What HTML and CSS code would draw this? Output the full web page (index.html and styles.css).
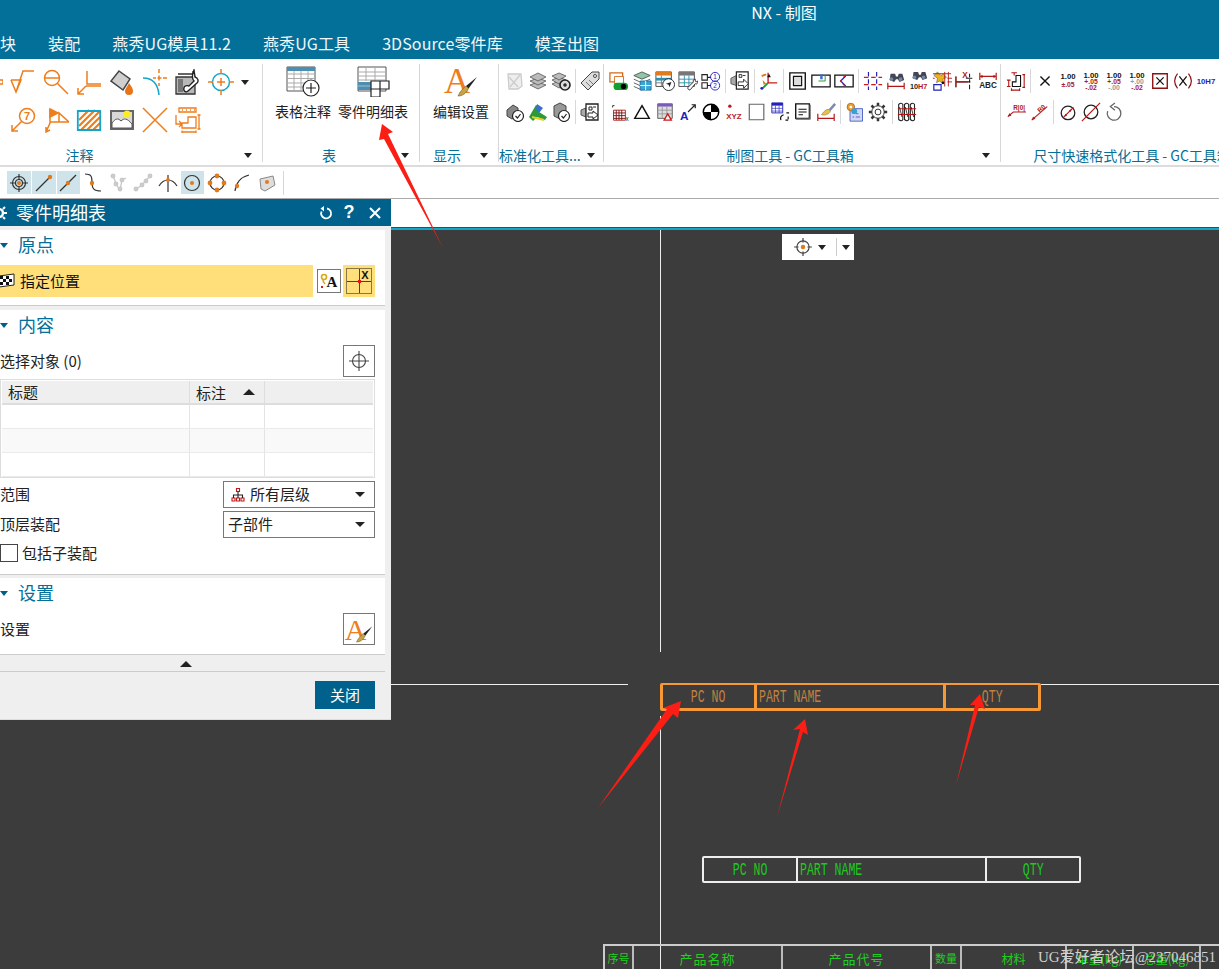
FILE: index.html
```html
<!DOCTYPE html>
<html lang="zh-CN">
<head>
<meta charset="utf-8">
<title>NX - 制图</title>
<link rel="stylesheet" href="styles.css">
</head>
<body>
<div class="app">
  <header class="topbar">
    <div class="wintitle">NX - 制图</div>
    <nav class="menu"><span>块</span><span>装配</span><span>燕秀UG模具11.2</span><span>燕秀UG工具</span><span>3DSource零件库</span><span>模圣出图</span></nav>
  </header>

  <section class="ribbon">
    <div class="group g-note">
      <div class="note-row">
        <div class="nc edge"><svg width="26" height="26" viewBox="0 0 26 26" class="os"><path d="M22 11h4v4h-4z"/></svg></div>
        <div class="nc"><svg width="26" height="26" viewBox="0 0 26 26" class="os"><path d="M1 11h10L6 23 1 11M6 23l7-21h11"/></svg></div>
        <div class="nc"><svg width="26" height="26" viewBox="0 0 26 26" class="os"><circle cx="9" cy="9" r="7.5"/><path d="M1.5 9h15M14.500 14.500L25 25"/></svg></div>
        <div class="nc"><svg width="26" height="26" viewBox="0 0 26 26" class="os"><path d="M11 2v13h14M10 17h15M10 17L2 25M2 19v6h6"/></svg></div>
        <div class="nc"><svg width="26" height="26" viewBox="0 0 26 26"><path d="M10 2l11 8-7 11L2 12z" fill="#cfcfcf" stroke="#444" stroke-width="1.500"/><path d="M20 14c3 4 4 6 4 8a4 4 0 0 1-8 0c0-2 2-4 4-8z" fill="#e8741a"/></svg></div>
        <div class="nc"><svg width="26" height="26" viewBox="0 0 26 26"><path d="M1 9c10 0 15 6 16 17" fill="none" stroke="#12a5c9" stroke-width="1.500"/><path class="or" d="M17 0v4M17 6.500v5M17 14v3M11 9h3M15.500 9h4M21 9h4"/></svg></div>
        <div class="nc"><svg width="26" height="26" viewBox="0 0 26 26"><path d="M1 8h19v17H1z" fill="#b8b8b8" stroke="#333" stroke-width="1.300"/><path d="M3 10h5v13H3z" fill="#777"/><path d="M3 5h15V2" fill="none" stroke="#333" stroke-width="1.300"/><path d="M19 1l1 7c3 1 4 4 2 6l-9 8c-2 2-5 0-4-3 0-2 3-3 5-2l5-5c-2-2-2-6 0-11z" fill="#fff" stroke="#222" stroke-width="1.400"/></svg></div>
        <div class="nc"><svg width="26" height="26" viewBox="0 0 26 26"><circle cx="13" cy="13" r="8.500" fill="none" stroke="#12a5c9" stroke-width="1.500"/><path class="or" d="M13 0v5M13 9v8M13 21v5M0 13h5M9 13h8M21 13h5"/></svg></div>
        <i class="tri drop"></i>
      </div>
      <div class="note-row">
        <div class="nc"><svg width="26" height="26" viewBox="0 0 26 26" class="os"><circle cx="17" cy="9" r="7.500"/><path d="M11.500 14.500L2 24M2 18v6h6"/><text x="17" y="13" class="t-seven">7</text></svg></div>
        <div class="nc"><svg width="26" height="26" viewBox="0 0 26 26" class="os"><path d="M7 2l8 4-8 4z" fill="#ee7d1b"/><path d="M7 2v14L3 25M3 20v5l4-2M7 15h19L16 6v9"/></svg></div>
        <div class="nc"><svg width="26" height="26" viewBox="0 0 26 26"><path d="M3 3h21v20H3z" fill="#fff"/><path d="M3 13L13 3M3 19L19 3M5 23L24 4M11 23L24 10M17 23l7-7" stroke="#ee7d1b" stroke-width="2.200" fill="none"/><path d="M1.800 4h22.400v19H1.800z" fill="none" stroke="#12a5c9" stroke-width="1.800"/></svg></div>
        <div class="nc"><svg width="26" height="26" viewBox="0 0 26 26"><rect x="1" y="3" width="24" height="20" fill="#666"/><rect x="3" y="5" width="20" height="16" fill="#d8d8d8"/><circle cx="18" cy="7" r="3.500" fill="#ffec20"/><path d="M3 16c4-5 6-5 9-2 3-3 6-3 11 3v4H3z" fill="#fff" stroke="#555"/></svg></div>
        <div class="nc"><svg width="26" height="26" viewBox="0 0 26 26" class="os"><path d="M1 1l24 24M25 1L1 25"/></svg></div>
        <div class="nc"><svg width="26" height="26" viewBox="0 0 26 26" class="os"><path d="M4 1h17v4H4zM7 3h1M11 3h1M15 3h1M19 3h1M1 8v9h6M4 14l3 3-3 3M7 21v-5h6v-6h8v11zM24 8v14M22.500 8h3M22.500 22h3M7 25h14M7 23.500v3M21 23.500v3" stroke-width="1.300"/></svg></div>
      </div>
      <div class="glabel"><span>注释</span><i class="tri"></i></div>
    </div>

    <div class="group g-table">
      <div class="bigs">
        <div class="big"><svg width="36" height="32" viewBox="0 0 36 32"><path d="M2 2h28v24H2z" fill="#fff" stroke="#555"/><path d="M2 2h28v4H2z" fill="#4d8fb0"/><path d="M2 9h28M2 13.500h28M2 18h28M2 22h28M9 6v20M16 6v20M23 6v20" stroke="#aaa"/><circle cx="26" cy="23" r="8" fill="#fff" stroke="#222" stroke-width="1.200"/><path d="M26 18v10M21 23h10" stroke="#222" stroke-width="1.200"/></svg><span>表格注释</span></div>
        <div class="big"><svg width="36" height="32" viewBox="0 0 36 32"><path d="M3 2h28v24H3z" fill="#fff" stroke="#555"/><path d="M3 7h28M3 11h28M3 15h28M11 2v14M20 2v14" stroke="#aaa"/><path d="M3 17h16v8H3z" fill="#4d8fb0"/><path d="M3 21h16" stroke="#9bc4d6"/><path d="M16 18h9v16h-9zM25 18h9v8h-9zM16 26h9" transform="translate(0 -2)" fill="#fff" stroke="#222" stroke-width="1.200"/></svg><span>零件明细表</span></div>
      </div>
      <div class="glabel"><span>表</span><i class="tri"></i></div>
    </div>

    <div class="group g-show">
      <div class="bigs">
        <div class="big"><svg class="paint" width="36" height="32" viewBox="0 0 36 32"><text x="14" y="28" class="t-paint">A</text><path d="M34 12L23 21l2.500 2.500z" fill="#222"/><path d="M23 21c-3 2-6 6-8 10 4 0 8-2 10.500-7.500z" fill="#c9a34a" stroke="#6a5a2a" stroke-width=".6"/></svg><span>编辑设置</span></div>
      </div>
      <div class="glabel"><span>显示</span><i class="tri"></i></div>
    </div>

    <div class="group g-std">
      <div class="irow">
        <div class="c"><svg width="20" height="20" viewBox="0 0 20 20" fill="none" stroke="#ccc" stroke-width="1.300"><path d="M3 3h13l1 12-4 3H4z" fill="#eee"/><path d="M5 16L15 4M4 6l9 10"/></svg></div>
        <div class="c"><svg width="20" height="20" viewBox="0 0 20 20" fill="#bbb" stroke="#555" stroke-width=".8"><path d="M10 11l8 3-8 4-8-4z"/><path d="M10 7l8 3-8 4-8-4z"/><path d="M10 2l8 4-8 4-8-4z"/></svg></div>
        <div class="c"><svg width="20" height="20" viewBox="0 0 20 20" fill="#bbb" stroke="#555" stroke-width=".8"><path d="M8 10l7 3-7 4-7-4z"/><path d="M8 6l7 3-7 4-7-4z"/><path d="M8 2l7 3-7 4-7-4z"/><circle cx="14" cy="14" r="5" fill="#ddd" stroke="#222" stroke-width="1.600"/><circle cx="14" cy="14" r="1.500" fill="#222"/></svg></div>
        <b class="sep"></b>
        <div class="c"><svg width="20" height="20" viewBox="0 0 20 20"><path d="M12 1h7v7L8 19l-7-7z" fill="#ddd" stroke="#444"/><circle cx="15" cy="5" r="1.500" fill="#fff" stroke="#444"/><path d="M6 11l5 5M9 9l4 4" stroke="#777"/></svg></div>
      </div>
      <div class="irow">
        <div class="c"><svg width="20" height="20" viewBox="0 0 20 20"><path d="M2 8l6-5 5 3v8l-6 3-5-3z" fill="#888" stroke="#444"/><circle cx="13" cy="14" r="5.500" fill="#fff" stroke="#222" stroke-width="1.200"/><path d="M10.500 14l2 2 3-4" stroke="#222" fill="none" stroke-width="1.200"/></svg></div>
        <div class="c"><svg width="20" height="20" viewBox="0 0 20 20"><path d="M1 15L8 3l4 2-1 5 8 5-2 3-8-3-4 4z" fill="#2c9a3a"/><path d="M9 2l6 4-4 5-3-4z" fill="#3c6fd0"/><path d="M4 15l12 3" stroke="#e6d020" stroke-width="2"/></svg></div>
        <div class="c"><svg width="20" height="20" viewBox="0 0 20 20"><path d="M3 4l6-3 6 3v9l-6 4-6-3z" fill="#999" stroke="#444"/><circle cx="13" cy="14" r="5.500" fill="#fff" stroke="#222" stroke-width="1.200"/><path d="M10.500 14l2 2 3-4" stroke="#222" fill="none" stroke-width="1.200"/></svg></div>
        <b class="sep"></b>
        <div class="c"><svg width="20" height="20" viewBox="0 0 20 20"><path d="M1 8l5-2v9l-5-2z" fill="#aaa" stroke="#555"/><path d="M6 2h12v16H6z" fill="#fff" stroke="#222" stroke-width="1.300"/><path d="M9 5h3v3H9zM13 5h3" stroke="#222" fill="none"/><path d="M8 11h5V9l5 4-5 4v-2H8z" fill="#fff" stroke="#222"/></svg></div>
      </div>
      <div class="glabel"><span>标准化工具...</span><i class="tri"></i></div>
    </div>

    <div class="group g-draw">
      <div class="irow">
        <div class="c"><svg width="22" height="22" viewBox="0 0 22 22"><path d="M1 2h14v10H1z" fill="#fff" stroke="#d26a1c" stroke-width="1.400"/><path d="M6 6h10v8H6z" fill="#fff" stroke="#d26a1c"/><rect x="5" y="13" width="16" height="8" rx="4" fill="#12a02e"/><circle cx="16" cy="17" r="3" fill="#000"/></svg></div>
        <div class="c"><svg width="22" height="22" viewBox="0 0 22 22"><path d="M11 1l9 4-9 4-9-4z" fill="#8fc7a6" stroke="#555"/><path d="M2 9l9 4 9-4M2 13l9 4M2 17l9 4" fill="none" stroke="#555"/><path d="M9 11h12v10H9z" fill="#38a5d8" stroke="#1c6e9a"/><path d="M15 11v10M9 16h12" stroke="#fff"/></svg></div>
        <div class="c"><svg width="22" height="22" viewBox="0 0 22 22"><path d="M1 1h17v16H1z" fill="#fff" stroke="#444"/><path d="M1 1h17v4H1z" fill="#e07a1c"/><path d="M1 9h17" stroke="#2a8fb0" stroke-width="3"/><path d="M1 13h12M7 5v12" stroke="#777"/><circle cx="15" cy="15" r="6.500" fill="#fff" stroke="#222"/><path d="M18 12l-6 2 3 1 1 3z" fill="#222"/></svg></div>
        <div class="c"><svg width="22" height="22" viewBox="0 0 22 22"><path d="M1 1h17v16H1z" fill="#fff" stroke="#444"/><path d="M1 1h17v4H1z" fill="#777"/><path d="M1 9h17M1 13h17M7 5v12M12 5v12" stroke="#2a8fb0"/><path d="M19 9c-2 0-3 2-2 3l-6 6c-1 2 2 4 3 2l5-6c2 1 3-1 3-3l-2 1-1-1z" fill="#fff" stroke="#222"/></svg></div>
        <div class="c"><svg width="22" height="22" viewBox="0 0 22 22" fill="none"><path d="M1 4h6v6H1zM1 13h6v6H1zM7 7h4M7 16h4" stroke="#222" stroke-width="1.200"/><circle cx="15.500" cy="6.500" r="5" stroke="#2222bb"/><circle cx="15.500" cy="16" r="5" stroke="#2222bb"/><text x="15.500" y="9" class="t-num">1</text><text x="15.500" y="18.500" class="t-num">2</text></svg></div>
        <b class="sep"></b>
        <div class="c"><svg width="22" height="22" viewBox="0 0 22 22"><path d="M1 8l6-3v11l-6-2z" fill="#aaa" stroke="#555"/><path d="M7 1h13v19H7z" fill="#fff" stroke="#222" stroke-width="1.300"/><path d="M10 4h3v3h-3zM14 5h3" stroke="#222" fill="none"/><path d="M9 12h6v-3l5 5-5 5v-3H9z" fill="#fff" stroke="#222"/></svg></div>
        <b class="sep"></b>
        <div class="c"><svg width="22" height="22" viewBox="0 0 22 22" fill="none"><path d="M10 2v11H20" stroke="#d01818" stroke-width="1.500"/><path d="M10 13L3 20" stroke="#12a02e" stroke-width="2"/><path d="M11 3l2 4H9z" fill="#111"/><path d="M3 6c2-2 3-2 5-2" stroke="#e07a1c" stroke-width="2"/><path d="M4 10l4 4-3 1z" fill="#e07a1c"/><circle cx="3" cy="19" r="1.500" fill="#2222bb"/></svg></div>
        <b class="sep"></b>
        <div class="c"><svg width="22" height="22" viewBox="0 0 22 22"><path d="M2 2h17v18H2z" fill="#fff" stroke="#111" stroke-width="1.500"/><path d="M6 6h9v10H6z" fill="#ddd" stroke="#111" stroke-width="1.300"/></svg></div>
        <div class="c"><svg width="24" height="22" viewBox="0 0 24 22"><path d="M1 4h22v14H1z" fill="#fff" stroke="#111" stroke-width="1.500"/><path d="M9 11h8V4" fill="none" stroke="#2a9d3a" stroke-width="1.200"/><rect x="11" y="3" width="3" height="6" fill="#3c6fd0"/></svg></div>
        <div class="c"><svg width="24" height="22" viewBox="0 0 24 22"><path d="M1 4h22v14H1z" fill="#fff" stroke="#111" stroke-width="1.500"/><path d="M14 5l-6 6 6 6" fill="none" stroke="#2222bb" stroke-width="1.500"/><path d="M13 5l-5 6 5 6" fill="none" stroke="#d01818" stroke-width="1.500" stroke-dasharray="3 3"/></svg></div>
        <b class="sep"></b>
        <div class="c"><svg width="22" height="22" viewBox="0 0 22 22" fill="none" stroke-width="1.300"><path d="M1 7h5M9 7h5M17 7h4M1 15h5M9 15h5M17 15h4" stroke="#d01818"/><path d="M6 1v5M6 9v5M6 17v4M15 1v5M15 9v5M15 17v4" stroke="#2222bb"/></svg></div>
        <div class="c"><svg width="22" height="22" viewBox="0 0 22 22" fill="none"><path d="M5 3h5l1 3h2l1-3h4l2 7-5 2-2-3h-2l-2 3-5-2z" fill="#445"/><circle cx="6" cy="9" r="2" fill="#6f8aa6"/><circle cx="16" cy="9" r="2" fill="#6f8aa6"/><path d="M2 13v7M20 13v7M2 17h18" stroke="#b01818" stroke-width="1.300"/></svg></div>
        <div class="c"><svg width="22" height="22" viewBox="0 0 22 22" fill="none"><path d="M5 1h5l1 3h2l1-3h4l2 7-5 2-2-3h-2l-2 3-5-2z" fill="#445"/><circle cx="6" cy="7" r="2" fill="#6f8aa6"/><circle cx="16" cy="7" r="2" fill="#6f8aa6"/><text x="1" y="20" class="t-tiny t-dark">10<tspan fill="#b01818">H7</tspan></text></svg></div>
        <div class="c"><svg width="22" height="22" viewBox="0 0 22 22" fill="none"><path d="M6 1l4 4 2-2 4 4-4 2 1 5-5-3-3 2 1-5-4-3z" fill="#e8b41c" stroke="#555" stroke-width=".6"/><path d="M1 3h20M1 8h2M17 8h5M17 12h5M18 1v16M14 1v16" stroke="#b01818"/><path d="M2 15h8v6H2z" stroke="#2222bb" stroke-width="1.300"/><circle cx="12" cy="13" r="1.500" fill="#111"/></svg></div>
        <div class="c"><svg width="22" height="22" viewBox="0 0 22 22" fill="none"><path d="M1 6v12M1 12h16M16 3v4M16 9v4M16 15v5M12 8h7" stroke="#222" stroke-width="1.200"/><path d="M1 6v12M1 12h13" stroke="#b01818" stroke-width="1.200"/><text x="11" y="8" class="t-x-red">X</text></svg></div>
        <div class="c"><svg width="22" height="22" viewBox="0 0 22 22" fill="none"><path d="M2 2v8M20 2v8M2 6h18" stroke="#b01818" stroke-width="1.300"/><path d="M2 6l3-2v4zM20 6l-3-2v4z" fill="#b01818"/><text x="11" y="19" class="t-abc">ABC</text></svg></div>
      </div>
      <div class="irow">
        <div class="c"><svg width="22" height="22" viewBox="0 0 22 22"><path d="M4 4h2M4 4v2" stroke="#222" fill="none"/><path d="M5 9h13v11H5z" fill="#fff" stroke="#b01818"/><path d="M5 12h13M5 15h13M5 18h13M8 9v11M11 9v11M14 9v11" stroke="#7a1010"/><text x="20" y="21" class="t-tiny2">x</text></svg></div>
        <div class="c"><svg width="22" height="22" viewBox="0 0 22 22"><path d="M11 4l8 14H3z" fill="none" stroke="#111" stroke-width="1.600"/></svg></div>
        <div class="c"><svg width="22" height="22" viewBox="0 0 22 22"><path d="M3 2h16v16H3z" fill="#ddd" stroke="#555"/><path d="M3 2h16v3H3z" fill="#7a5ac0"/><path d="M3 9h16M3 13h16M8 5v13M13 5v13" stroke="#999"/><path d="M14 13l4 7h-8z" fill="#fff" stroke="#d01818" stroke-width="1.400"/></svg></div>
        <div class="c"><svg width="22" height="22" viewBox="0 0 22 22" fill="none"><path d="M11 11l8-8M15 3h4v4" stroke="#222" stroke-width="1.300"/><text x="7" y="20" class="t-a">A</text></svg></div>
        <div class="c"><svg width="22" height="22" viewBox="0 0 22 22"><circle cx="11" cy="11" r="8.500" fill="#fff" stroke="#000" stroke-width="1.600"/><path d="M11 11V2.500a8.500 8.500 0 0 1 8.500 8.500zM11 11v8.500A8.500 8.500 0 0 1 2.500 11z" fill="#000"/></svg></div>
        <div class="c"><svg width="24" height="22" viewBox="0 0 24 22"><circle cx="7" cy="4" r="2" fill="#c01818"/><text x="12" y="19" class="t-xyz">XYZ</text></svg></div>
        <div class="c"><svg width="22" height="22" viewBox="0 0 22 22"><path d="M2.500 2.500h16v17h-16z" fill="#fff" stroke="#666" stroke-width="1.300"/></svg></div>
        <div class="c"><svg width="22" height="22" viewBox="0 0 22 22"><path d="M2 1h12v11H2z" fill="#fff" stroke="#2222bb"/><path d="M2 1h12v3H2z" fill="#2222bb"/><path d="M2 7h12M2 10h12M6 4v8M10 4v8" stroke="#2222bb" stroke-width=".7"/><path d="M15 14c-3 1-4 3-3 6M18 12h3M20 16v3M17 20h3" stroke="#111" fill="none" stroke-width="1.300"/></svg></div>
        <div class="c"><svg width="22" height="22" viewBox="0 0 22 22"><path d="M3 2h15v16H3z" fill="#fff" stroke="#111" stroke-width="1.500"/><path d="M3 19h16M19 3v16" stroke="#888" stroke-width="1.500"/><path d="M6 8h9M6 11h9M6 14h5" stroke="#111" stroke-width="1.200"/></svg></div>
        <div class="c"><svg width="22" height="22" viewBox="0 0 22 22"><path d="M20 1l-6 7 2 2 6-7z" fill="#7a8ab0"/><path d="M14 8c-3 0-5 2-8 6 4 1 8 0 10-4z" fill="#e8c04a" stroke="#775" stroke-width=".6"/><path d="M2 13v8M20 13v8M2 18h18" stroke="#b01818" stroke-width="1.300"/></svg></div>
        <b class="sep"></b>
        <div class="c"><svg width="24" height="24" viewBox="0 0 24 24"><path d="M6 8h15v15H6z" fill="#cfd7f5" stroke="#3c52c0"/><path d="M13 14h3M13 18h5M9 18h2" stroke="#3c52c0"/><circle cx="7" cy="6" r="4.500" fill="#e8a038" stroke="#a8681c"/><circle cx="7" cy="6" r="1.500" fill="#fff"/><circle cx="11" cy="11" r="3.500" fill="#38a0d8"/></svg></div>
        <div class="c"><svg width="24" height="24" viewBox="0 0 24 24" fill="none" stroke="#333" stroke-width="1.200"><circle cx="12" cy="12" r="3.500"/><circle cx="12" cy="12" r="7.500"/><path d="M12 1v3.500M12 19.500V23M1 12h3.500M19.500 12H23M4.200 4.200l2.500 2.500M17.300 17.300l2.500 2.500M4.200 19.800l2.500-2.500M17.300 6.700l2.500-2.500" stroke-width="3"/></svg></div>
        <b class="sep"></b>
        <div class="c"><svg width="24" height="24" viewBox="0 0 24 24" fill="none" stroke="#222" stroke-width="1.300"><path d="M2 3c2-2 4-2 5 0v18c-1 2-3 2-5 0zM9 3c2-2 4-2 5 0v18c-1 2-3 2-5 0zM16 3c2-2 4-2 5 0v18c-1 2-3 2-5 0z"/><path d="M1 8h22M1 15h22" stroke="#c01818"/><path d="M3 6l3 12M10 6l3 12M17 6l3 12" stroke-width="1"/></svg></div>
      </div>
      <div class="glabel"><span>制图工具 - GC工具箱</span><i class="tri"></i></div>
    </div>

    <div class="group g-dim">
      <div class="irow">
        <div class="c"><svg width="22" height="22" viewBox="0 0 22 22" fill="none" stroke="#b01818" stroke-width="1.200"><path d="M6 2h6v0M9 2v3"/><path d="M1 10h4M3 10v7M1 17h4M18 4h3M20 4v14M18 18h3M6 21h9M6 19v3M15 19v3"/><path d="M7 17v-5h4V5h5v12z" fill="#fff" stroke="#111"/></svg></div>
        <b class="sep"></b>
        <div class="c"><svg width="22" height="22" viewBox="0 0 22 22"><path d="M6 6l10 10M16 6L6 16" stroke="#111" stroke-width="1.500"/></svg></div>
        <div class="c"><svg width="22" height="22" viewBox="0 0 22 22"><text x="11" y="9" class="t-100">1.00</text><text x="11" y="18" class="t-tol t-red">±.05</text></svg></div>
        <div class="c"><svg width="22" height="22" viewBox="0 0 22 22"><text x="11" y="8" class="t-100">1.00</text><text x="11" y="14.500" class="t-tol t-red">+.05</text><text x="11" y="20.500" class="t-tol t-red">-.02</text></svg></div>
        <div class="c"><svg width="22" height="22" viewBox="0 0 22 22"><text x="11" y="8" class="t-100">1.00</text><text x="11" y="14.500" class="t-tol t-red">+.05</text><text x="11" y="20.500" class="t-tol t-gray">-.00</text></svg></div>
        <div class="c"><svg width="22" height="22" viewBox="0 0 22 22"><text x="11" y="8" class="t-100">1.00</text><text x="11" y="14.500" class="t-tol t-gray">+.00</text><text x="11" y="20.500" class="t-tol t-red">-.02</text></svg></div>
        <div class="c"><svg width="22" height="22" viewBox="0 0 22 22" fill="none"><path d="M3 3h16v16H3z" stroke="#8a1010" stroke-width="1.500"/><path d="M7 7l8 8M15 7l-8 8" stroke="#111" stroke-width="1.400"/></svg></div>
        <div class="c"><svg width="22" height="22" viewBox="0 0 22 22" fill="none"><path d="M5 3c-4 5-4 11 0 16M17 3c4 5 4 11 0 16" stroke="#8a1010" stroke-width="1.300"/><path d="M7 6l8 10M15 6L7 16" stroke="#111" stroke-width="1.400"/></svg></div>
        <div class="c"><svg width="22" height="22" viewBox="0 0 22 22"><text x="11" y="14" class="t-10h7">10H7</text></svg></div>
      </div>
      <div class="irow">
        <div class="c"><svg width="22" height="22" viewBox="0 0 22 22" fill="none"><path d="M2 16l6-5h14" stroke="#b01818" stroke-width="1.200"/><path d="M2 16l4-1-2-3z" fill="#b01818"/><text x="8" y="9" class="t-rd">R|0|</text></svg></div>
        <div class="c"><svg width="22" height="22" viewBox="0 0 22 22" fill="none"><path d="M3 20L20 5" stroke="#b01818" stroke-width="1.200"/><path d="M3 20l1.500-4 2.500 2.500z" fill="#b01818"/><text x="10" y="11" class="t-rd rot">R0</text></svg></div>
        <b class="sep"></b>
        <div class="c"><svg width="22" height="22" viewBox="0 0 22 22" fill="none"><circle cx="11" cy="12" r="7.500" stroke="#222" stroke-width="1.400"/><path d="M6 17L17 6" stroke="#b01818" stroke-width="1.300"/><path d="M7 16l1-3 2 2zM15 8l-1 3-2-2z" fill="#b01818"/></svg></div>
        <div class="c"><svg width="22" height="22" viewBox="0 0 22 22" fill="none"><circle cx="11" cy="11" r="7.500" stroke="#222" stroke-width="1.400"/><path d="M1 21L21 1" stroke="#b01818" stroke-width="1.300"/></svg></div>
        <div class="c"><svg width="22" height="22" viewBox="0 0 22 22" fill="none" stroke="#666" stroke-width="1.400"><path d="M11 5a7.500 7.500 0 1 1-7 5"/><path d="M12 1L7 5l5 4"/></svg></div>
      </div>
      <div class="glabel"><span>尺寸快速格式化工具 - GC工具箱</span><i class="tri"></i></div>
    </div>
  </section>

  <section class="selbar">
    <div class="s on"><svg width="20" height="20" viewBox="0 0 20 20" fill="none" stroke="#333" stroke-width="1.200"><circle cx="10" cy="10" r="6.500"/><circle cx="10" cy="10" r="3.500"/><path d="M10 1v5M10 14v5M1 10h5M14 10h5"/><circle cx="10" cy="10" r="2" fill="#e07a1c" stroke="none"/></svg></div>
    <div class="s on"><svg width="20" height="20" viewBox="0 0 20 20"><path d="M2 18L16 4" stroke="#333" stroke-width="1.200"/><circle cx="16" cy="4" r="2.200" fill="#e07a1c"/></svg></div>
    <div class="s on"><svg width="20" height="20" viewBox="0 0 20 20"><path d="M2 18L18 2" stroke="#333" stroke-width="1.200"/><circle cx="10" cy="10" r="2.200" fill="#e07a1c"/></svg></div>
    <div class="s"><svg width="20" height="20" viewBox="0 0 20 20"><path d="M2 1c6 0 7 2 7 8 0 7 2 9 9 9" fill="none" stroke="#333" stroke-width="1.200"/><circle cx="9" cy="10" r="2.200" fill="#e07a1c"/></svg></div>
    <div class="s"><svg width="20" height="20" viewBox="0 0 20 20" fill="none" stroke="#c8c8c8" stroke-width="1.300"><path d="M5 2l3 9 4 6 2-10 4-2"/><circle cx="5" cy="3" r="1.800" fill="#ccc"/><circle cx="8" cy="11" r="1.800" fill="#ccc"/><circle cx="12" cy="16" r="1.800" fill="#ccc"/><circle cx="14" cy="7" r="1.800" fill="#ccc"/></svg></div>
    <div class="s"><svg width="20" height="20" viewBox="0 0 20 20" fill="none" stroke="#c8c8c8" stroke-width="1.300"><path d="M2 17l7-5 8-9"/><circle cx="3" cy="16" r="1.800" fill="#ccc"/><circle cx="9" cy="12" r="1.800" fill="#ccc"/><circle cx="13" cy="8" r="1.800" fill="#ccc"/><circle cx="17" cy="3" r="1.800" fill="#ccc"/></svg></div>
    <div class="s"><svg width="20" height="20" viewBox="0 0 20 20"><path d="M1 13c3-5 6-6 9-6s6 1 9 6M10 2v17" fill="none" stroke="#333" stroke-width="1.200"/><circle cx="10" cy="7" r="2" fill="#e07a1c"/></svg></div>
    <div class="s on"><svg width="20" height="20" viewBox="0 0 20 20"><circle cx="10" cy="10" r="7.500" fill="none" stroke="#333" stroke-width="1.200"/><circle cx="10" cy="10" r="2" fill="#e07a1c"/></svg></div>
    <div class="s"><svg width="20" height="20" viewBox="0 0 20 20"><circle cx="10" cy="10" r="7" fill="none" stroke="#333" stroke-width="1.200"/><g fill="#e07a1c"><circle cx="10" cy="3" r="2.400"/><circle cx="10" cy="17" r="2.400"/><circle cx="3" cy="10" r="2.400"/><circle cx="17" cy="10" r="2.400"/></g></svg></div>
    <div class="s"><svg width="20" height="20" viewBox="0 0 20 20"><path d="M3 18c1-8 6-14 14-16" fill="none" stroke="#333" stroke-width="1.200"/><circle cx="5" cy="13" r="2.200" fill="#e07a1c"/></svg></div>
    <div class="s"><svg width="20" height="20" viewBox="0 0 20 20"><path d="M3 6l13-3 2 9-10 6-4-2z" fill="#ddd" stroke="#888"/><circle cx="10" cy="9" r="2" fill="#e07a1c"/></svg></div>
    <b class="selsep"></b>
  </section>

  <main class="work">
    <div class="strip"></div>
    <div class="tabline"></div>
    <div class="canvas">
      <b class="vline v1"></b>
      <b class="vline v2"></b>
      <b class="hline h1"></b>
      <b class="hline h2"></b>

      <div class="snap">
        <svg width="20" height="20" viewBox="0 0 18 18" fill="none" stroke="#444" stroke-width="1.100"><circle cx="9" cy="9" r="5.500"/><path d="M9 1v4M9 13v4M1 9h4M13 9h4"/><circle cx="9" cy="9" r="2" fill="#e07a1c" stroke="none"/></svg>
        <i class="tri snap-t"></i>
        <b class="snap-sep"></b>
        <i class="tri"></i>
      </div>

      <div class="cad orange">
        <div class="cell w95 ctr"><span>PC NO</span></div>
        <div class="cell w189"><span>PART NAME</span></div>
        <div class="cell fill ctr"><span>QTY</span></div>
      </div>
      <div class="cad white">
        <div class="cell w95 ctr"><span>PC NO</span></div>
        <div class="cell w189"><span>PART NAME</span></div>
        <div class="cell fill ctr"><span>QTY</span></div>
      </div>

      <div class="btable">
        <div class="bc b1">序号</div>
        <div class="bc b3">产品名称</div>
        <div class="bc b4">产品代号</div>
        <div class="bc b5">数量</div>
        <div class="bc b6">材料</div>
        <div class="bc b7">单重(kg)</div>
        <div class="bc b8">总重(kg)</div>
      </div>
      <div class="mark">UG爱好者论坛@237046851</div>
    </div>

    <aside class="dialog">
      <div class="dtitle">
        <svg class="gear" width="10" height="16" viewBox="0 0 10 16"><circle cx="1" cy="8" r="4" fill="none" stroke="#fff" stroke-width="2.400"/><path d="M1 1v3M1 12v3M5 4L7 2M5 12l2 2M6 8h3" stroke="#fff" stroke-width="2"/></svg>
        <span class="dname">零件明细表</span>
        <svg width="14" height="14" viewBox="0 0 14 14" fill="none" stroke="#fff" stroke-width="1.800"><path d="M8 2.500a5 5 0 1 1-5.500 3"/><path d="M5 0v5.500L1.500 2.500z" fill="#fff" stroke="none"/></svg>
        <span class="qm">?</span>
        <svg class="cl" width="14" height="14" viewBox="0 0 14 14" stroke="#fff" stroke-width="2"><path d="M2 2l10 10M12 2L2 12"/></svg>
      </div>

      <div class="sec s1">
        <div class="shead"><i class="dtri"></i><span>原点</span></div>
        <div class="spec">
          <div class="yellow">
            <svg width="18" height="18" viewBox="0 0 18 18"><path d="M1 4l15-2v11L1 15z" fill="#fff" stroke="#222"/><g fill="#111"><path d="M2 4h3v3H2zM8 4h3v3H8zM5 7h3v3H5zM11 7h3v3h-3zM2 10h3v3H2zM8 10h3v3H8z"/></g></svg>
            <span>指定位置</span>
          </div>
          <div class="ibtn small"><svg width="20" height="20" viewBox="0 0 20 20"><circle cx="5" cy="6" r="2.500" fill="none" stroke="#d8a818" stroke-width="1.600"/><path d="M4 9c0 2 1 3 2 4" fill="none" stroke="#d8a818" stroke-width="1.600"/><rect x="2" y="15" width="2" height="2" fill="#e01818"/><text x="13" y="16" class="t-biga">A</text></svg></div>
          <div class="ybox"><svg width="32" height="32" viewBox="0 0 32 32"><path d="M3.500 3.500h25v25h-25z" fill="none" stroke="#111" stroke-dasharray="1 1"/><path d="M16.500 4v24M4 16.500h24" stroke="#444" fill="none"/><rect x="15" y="15" width="3" height="3" fill="#e01818"/><text x="22" y="14" class="t-bigx">X</text></svg></div>
        </div>
      </div>

      <div class="sec s2">
        <div class="shead"><i class="dtri"></i><span>内容</span></div>
        <div class="frow picker">
          <span>选择对象 (0)</span>
          <div class="ibtn"><svg width="24" height="24" viewBox="0 0 24 24" fill="none" stroke="#444" stroke-width="1.100"><circle cx="12" cy="12" r="6.500"/><path d="M12 2v20M2 12h20"/></svg></div>
        </div>
        <div class="list">
          <div class="lrow lhead"><div>标题</div><div class="sort">标注<i class="uptri"></i></div><div></div></div>
          <div class="lrow"><div></div><div></div><div></div></div>
          <div class="lrow alt"><div></div><div></div><div></div></div>
          <div class="lrow"><div></div><div></div><div></div></div>
        </div>
        <div class="frow sel1"><span>范围</span>
          <div class="select"><svg width="16" height="16" viewBox="0 0 16 16" fill="none" stroke="#c01818" stroke-width="1.100"><path d="M6.500 1.500h3v3h-3zM2 11h3v3H2zM6.500 11h3v3h-3zM11 11h3v3h-3z"/><path d="M8 4.500V8M3.500 11V8h9v3M8 8v3" stroke="#222"/></svg><span>所有层级</span><i class="tri black"></i></div>
        </div>
        <div class="frow sel2"><span>顶层装配</span>
          <div class="select"><span>子部件</span><i class="tri black"></i></div>
        </div>
        <div class="check"><i class="box"></i><span>包括子装配</span></div>
      </div>

      <div class="sec s3">
        <div class="shead"><i class="dtri"></i><span>设置</span></div>
        <div class="frow picker"><span>设置</span>
          <div class="ibtn"><svg class="paint" width="30" height="27" viewBox="0 0 36 32"><text x="14" y="28" class="t-paint">A</text><path d="M34 12L23 21l2.500 2.500z" fill="#222"/><path d="M23 21c-3 2-6 6-8 10 4 0 8-2 10.500-7.500z" fill="#c9a34a" stroke="#6a5a2a" stroke-width=".6"/></svg></div>
        </div>
      </div>

      <div class="expander"><i class="uptri"></i></div>
      <div class="dfoot"><div class="closebtn">关闭</div></div>
    </aside>
  </main>

  <svg class="arrows" width="1219" height="969" viewBox="0 0 1219 969"><g fill="#fa1e14"><path d="M382 124l11 8-5 2 55 114-59-109-5 1z"/><path d="M681 701l-3 17-5-4-75 94 69-99-4-1z"/><path d="M805 719l3 16-5-3-26 85 23-88-7 1z"/><path d="M980 694l5 15-6-2-23 78 19-80-5 0z"/></g></svg>
</div>
</body>
</html>
```

FILE: styles.css
```css
* { box-sizing: border-box; }
html, body { margin: 0; padding: 0; }
body {
  width: 1219px;
  height: 969px;
  overflow: hidden;
  background: #3c3c3c;
  font-family: "Noto Sans CJK SC", "Liberation Sans", sans-serif;
  font-size: 14px;
  color: #222;
}
i, b { display: block; font-style: normal; }
.app { position: relative; width: 1219px; height: 969px; display: flex; flex-direction: column; overflow: hidden; }

.topbar { height: 59px; flex: none; background: #03709a; color: #fff; }
.wintitle { height: 26px; line-height: 25px; padding-left: 349px; text-align: center; font-size: 16px; }
.menu { display: flex; gap: 32px; height: 33px; line-height: 35px; font-size: 16px; white-space: nowrap; color: #f2f7fa; letter-spacing: .1px; }

.ribbon { height: 108px; flex: none; display: flex; background: #fff; border-bottom: 2px solid #dcdcdc; padding-top: 5px; overflow: hidden; }
.group { position: relative; height: 98px; flex: none; display: flex; flex-direction: column; border-right: 1px solid #d8d8d8; }
.g-note { width: 342px; margin-left: -79px; padding-left: 85px; }
.g-table { width: 157px; padding-left: 5px; }
.g-show { width: 79px; padding-left: 6px; }
.g-std { width: 105px; padding-left: 4px; }
.g-draw { width: 397px; padding-left: 3px; }
.g-dim { width: 286px; padding-left: 3px; border-right: 0; }

.note-row { display: flex; align-items: center; height: 36px; margin-bottom: 2px; }
.nc { width: 33px; height: 36px; flex: none; display: flex; align-items: center; justify-content: center; }
.edge { margin-left: -33px; }
.drop { margin-left: 4px; }
.os { fill: none; stroke: #ee7d1b; stroke-width: 1.500; }
.or { stroke: #ee7d1b; stroke-width: 1.500; fill: none; }

.glabel { margin-top: auto; margin-bottom: -3px; height: 20px; display: flex; align-items: center; color: #03709a; font-size: 14px; line-height: 20px; white-space: nowrap; }
.glabel span { flex: 1; text-align: center; }
.g-note .glabel { margin-left: -85px; }
.g-table .glabel { margin-left: -5px; }
.g-show .glabel { margin-left: -6px; }
.g-std .glabel { margin-left: -4px; }
.g-draw .glabel { margin-left: -3px; }
.g-dim .glabel { margin-left: -3px; }
.glabel .tri { margin: 0 10px 0 6px; flex: none; }

.tri { width: 0; height: 0; border-left: 4px solid transparent; border-right: 4px solid transparent; border-top: 5px solid #222; }
.tri.black { border-left-width: 5px; border-right-width: 5px; border-top-width: 5px; }

.bigs { display: flex; padding-top: 1px; }
.big { width: 70px; flex: none; display: flex; flex-direction: column; align-items: center; }
.big span { margin-top: 4px; font-size: 14px; line-height: 20px; white-space: nowrap; color: #222; }
.paint { overflow: visible; }

.irow { display: flex; align-items: center; height: 24px; margin-top: 5px; }
.irow + .irow { margin-top: 7px; }
.c { width: 23px; height: 24px; flex: none; display: flex; align-items: center; justify-content: center; }
.c svg { flex: none; width: 20px; height: 20px; }
.sep { width: 1px; height: 24px; background: #d8d8d8; margin: 0 2px 0 3px; flex: none; }

.selbar { height: 32px; flex: none; display: flex; align-items: center; gap: 1px; background: #fff; border-bottom: 1px solid #aaa; padding: 0 0 0 7px; }
.s { width: 23.800px; height: 23px; flex: none; display: flex; align-items: center; justify-content: center; }
.s.on { background: #cfe4ea; }
.selsep { width: 1px; height: 24px; background: #d8d8d8; margin-left: 3px; }

.work { position: relative; flex: 1; display: flex; flex-direction: column; min-height: 0; }
.strip { height: 28px; flex: none; background: #fff; }
.tabline { height: 3px; flex: none; background: #12a5c6; border-top: 1px solid #005f88; }
.canvas { position: relative; flex: 1; background: #3c3c3c; overflow: hidden; }

.vline { position: absolute; left: 660px; width: 1px; background: #eee; }
.v1 { top: 0; height: 422px; }
.v2 { top: 486px; bottom: 0; }
.hline { position: absolute; top: 454px; height: 1px; background: #eee; }
.h1 { left: 391px; width: 237px; }
.h2 { left: 1041px; right: 0; }

.snap { position: absolute; left: 782px; top: 4px; width: 72px; height: 26px; background: #fff; display: flex; align-items: center; padding-left: 11px; }
.snap-t { margin-left: 5px; }
.snap-sep { width: 1px; height: 18px; background: #ccc; margin: 0 5px 0 10px; }

.cad { position: absolute; display: flex; height: 28px; border-style: solid; border-radius: 2px; font-family: "Liberation Mono", monospace; font-size: 18px; }
.cad.orange { left: 660px; top: 453px; width: 381px; border-width: 2px 3px 3px; border-color: #f79836; color: #c18140; }
.cad.white { left: 702px; top: 626px; width: 379px; height: 27px; border-width: 2px; border-color: #eee; color: #20c820; }
.cell { display: flex; align-items: center; padding-left: 2px; white-space: nowrap; border-right: 2px solid; height: 100%; overflow: hidden; }
.orange .cell { border-right-width: 3px; border-color: #f79836; }
.white .cell { border-color: #eee; }
.cell span { display: inline-block; transform: scaleX(.64); transform-origin: left center; }
.ctr { justify-content: center; padding-left: 0; }
.ctr span { transform-origin: center center; }
.w95 { width: 94px; flex: none; }
.w189 { width: 189px; flex: none; }
.fill { flex: 1; border-right: 0; }
.orange .fill { border-right: 0; }

.btable { position: absolute; left: 603px; top: 714px; right: -20px; height: 30px; display: flex; border-top: 2px solid #ccc; border-left: 2px solid #ccc; color: #1fd01f; font-size: 13px; line-height: 25px; }
.bc { flex: none; height: 28px; border-right: 2px solid #bbb; text-align: center; white-space: nowrap; letter-spacing: 1px; overflow: hidden; }
.b1 { width: 29px; letter-spacing: 0; font-size: 11px; }
.b3 { width: 149px; }
.b4 { width: 149px; }
.b5 { width: 30px; letter-spacing: 0; font-size: 11px; }
.b6 { width: 105px; letter-spacing: 0; font-size: 12px; }
.b7 { width: 67px; letter-spacing: 0; font-size: 12px; }
.b8 { width: 67px; letter-spacing: 0; font-size: 12px; }
.mark { position: absolute; left: 1038px; top: 716px; width: 181px; color: #d2d2d2; font-family: "Liberation Serif", "Noto Sans CJK SC", serif; font-size: 15px; line-height: 22px; white-space: nowrap; }

.dialog { position: absolute; left: 0; top: 0; width: 391px; height: 520px; background: #efefef; display: flex; flex-direction: column; box-shadow: 0 1px 0 #ddd; }
.dtitle { height: 27px; flex: none; background: #00628c; color: #fff; display: flex; align-items: center; padding-right: 10px; }
.gear { flex: none; margin-left: -2px; }
.dname { font-size: 18px; margin-left: 8px; flex: 1; white-space: nowrap; line-height: 24px; padding-bottom: 2px; }
.qm { width: 12px; margin: 0 13px 0 10px; text-align: center; font: bold 18px "Liberation Sans", sans-serif; }
.cl { margin-right: -1px; }

.sec { width: 385px; background: #fff; padding-right: 10px; border-bottom: 1px solid #ccc; flex: none; }
.s1 { margin-top: 4px; height: 76px; }
.s2 { margin-top: 4px; height: 265px; }
.s3 { margin-top: 3px; height: 77px; }
.shead { height: 30px; display: flex; align-items: center; color: #03709a; font-size: 18px; line-height: 28px; }
.shead span { margin-left: 10px; padding-bottom: 2px; }
.dtri { width: 0; height: 0; border-left: 4px solid transparent; border-right: 4px solid transparent; border-top: 5px solid #005f88; margin-top: 1px; }

.spec { display: flex; align-items: center; margin-top: 5px; height: 32px; }
.yellow { width: 313px; height: 32px; background: #ffdf7a; display: flex; align-items: center; font-size: 15px; color: #111; }
.yellow span { padding-bottom: 2px; }
.yellow svg { margin-left: -2px; margin-right: 4px; flex: none; }
.ybox { width: 32px; height: 32px; background: #ffdf7a; margin-left: 2px; flex: none; }
.ibtn { width: 32px; height: 32px; border: 1px solid #777; background: #fff; display: flex; align-items: center; justify-content: center; flex: none; }
.ibtn.small { width: 24px; height: 24px; margin-left: 4px; }

.frow { display: flex; align-items: center; justify-content: space-between; font-size: 15px; color: #222; white-space: nowrap; }
.frow span { padding-bottom: 2px; }
.picker { margin-top: 5px; height: 32px; }
.list { margin-top: 2px; height: 99px; border: 1px solid #ddd; padding: 1px 1px 0; }
.lrow { display: grid; grid-template-columns: 188px 75px 1fr; height: 24px; border-bottom: 1px solid #eaeaea; }
.lrow > div { border-right: 1px solid #e4e4e4; }
.lrow > div:last-child { border-right: 0; }
.lrow.alt { background: #f9f9f9; }
.lhead { background: #efefef; height: 24px; border-bottom: 2px solid #ddd; font-size: 15px; line-height: 21px; }
.lhead > div { padding-left: 6px; border-right-color: #ddd; }
.sort { display: flex; align-items: center; justify-content: space-between; padding-right: 9px; }
.uptri { width: 0; height: 0; border-left: 6px solid transparent; border-right: 6px solid transparent; border-bottom: 6px solid #222; }
.select { width: 152px; height: 27px; border: 1px solid #777; display: flex; align-items: center; padding: 0 9px 0 4px; background: #fff; gap: 4px; }
.select svg { margin-left: 2px; flex: none; }
.select .tri { margin-left: auto; }
.sel1 { margin-top: 3px; }
.sel2 { margin-top: 3px; }
.check { display: flex; align-items: center; margin-top: 6px; height: 18px; font-size: 15px; white-space: nowrap; }
.check span { padding-bottom: 2px; }
.box { width: 18px; height: 18px; border: 1px solid #444; background: #fff; margin-right: 4px; flex: none; }

.expander { width: 385px; height: 17px; flex: none; border-bottom: 1px solid #ccc; display: flex; justify-content: center; align-items: center; padding-top: 2px; padding-right: 13px; }
.dfoot { width: 385px; padding: 9px 10px 0 0; display: flex; justify-content: flex-end; }
.closebtn { width: 60px; height: 28px; background: #00628c; color: #fff; font-size: 15px; line-height: 27px; text-align: center; }

.arrows { position: absolute; left: 0; top: 0; pointer-events: none; }

text { font-family: "Liberation Sans", sans-serif; text-anchor: middle; }
.t-paint { font-family: "Liberation Serif", serif; font-size: 36px; fill: #ee7d1b; }
.t-seven { font-size: 11px; fill: #ee7d1b; stroke: none; font-weight: bold; }
.t-num { font-size: 7px; fill: #2222bb; }
.t-tiny { font-size: 8px; font-weight: bold; text-anchor: start; }
.t-dark { fill: #222; }
.t-tiny2 { font-size: 7px; fill: #222; }
.t-x-red { font-size: 9px; font-weight: bold; fill: #b01818; }
.t-abc { font-size: 9px; font-weight: bold; fill: #222; }
.t-a { font-size: 13px; fill: #2222bb; font-weight: bold; }
.t-xyz { font-size: 9.500px; font-weight: bold; fill: #c01818; }
.t-100 { font-size: 8.500px; font-weight: bold; fill: #111; }
.t-tol { font-size: 7.500px; font-weight: bold; }
.t-red { fill: #a82020; }
.t-gray { fill: #999; }
.t-10h7 { font-size: 8.500px; font-weight: bold; fill: #2222bb; }
.t-rd { font-size: 7px; font-weight: bold; fill: #b01818; text-anchor: start; }
.rot { transform: rotate(-42deg); transform-origin: 12px 9px; }
.t-biga { font-family: "Liberation Serif", serif; font-size: 15px; font-weight: bold; fill: #111; }
.t-bigx { font-size: 11px; font-weight: bold; fill: #111; }
```
